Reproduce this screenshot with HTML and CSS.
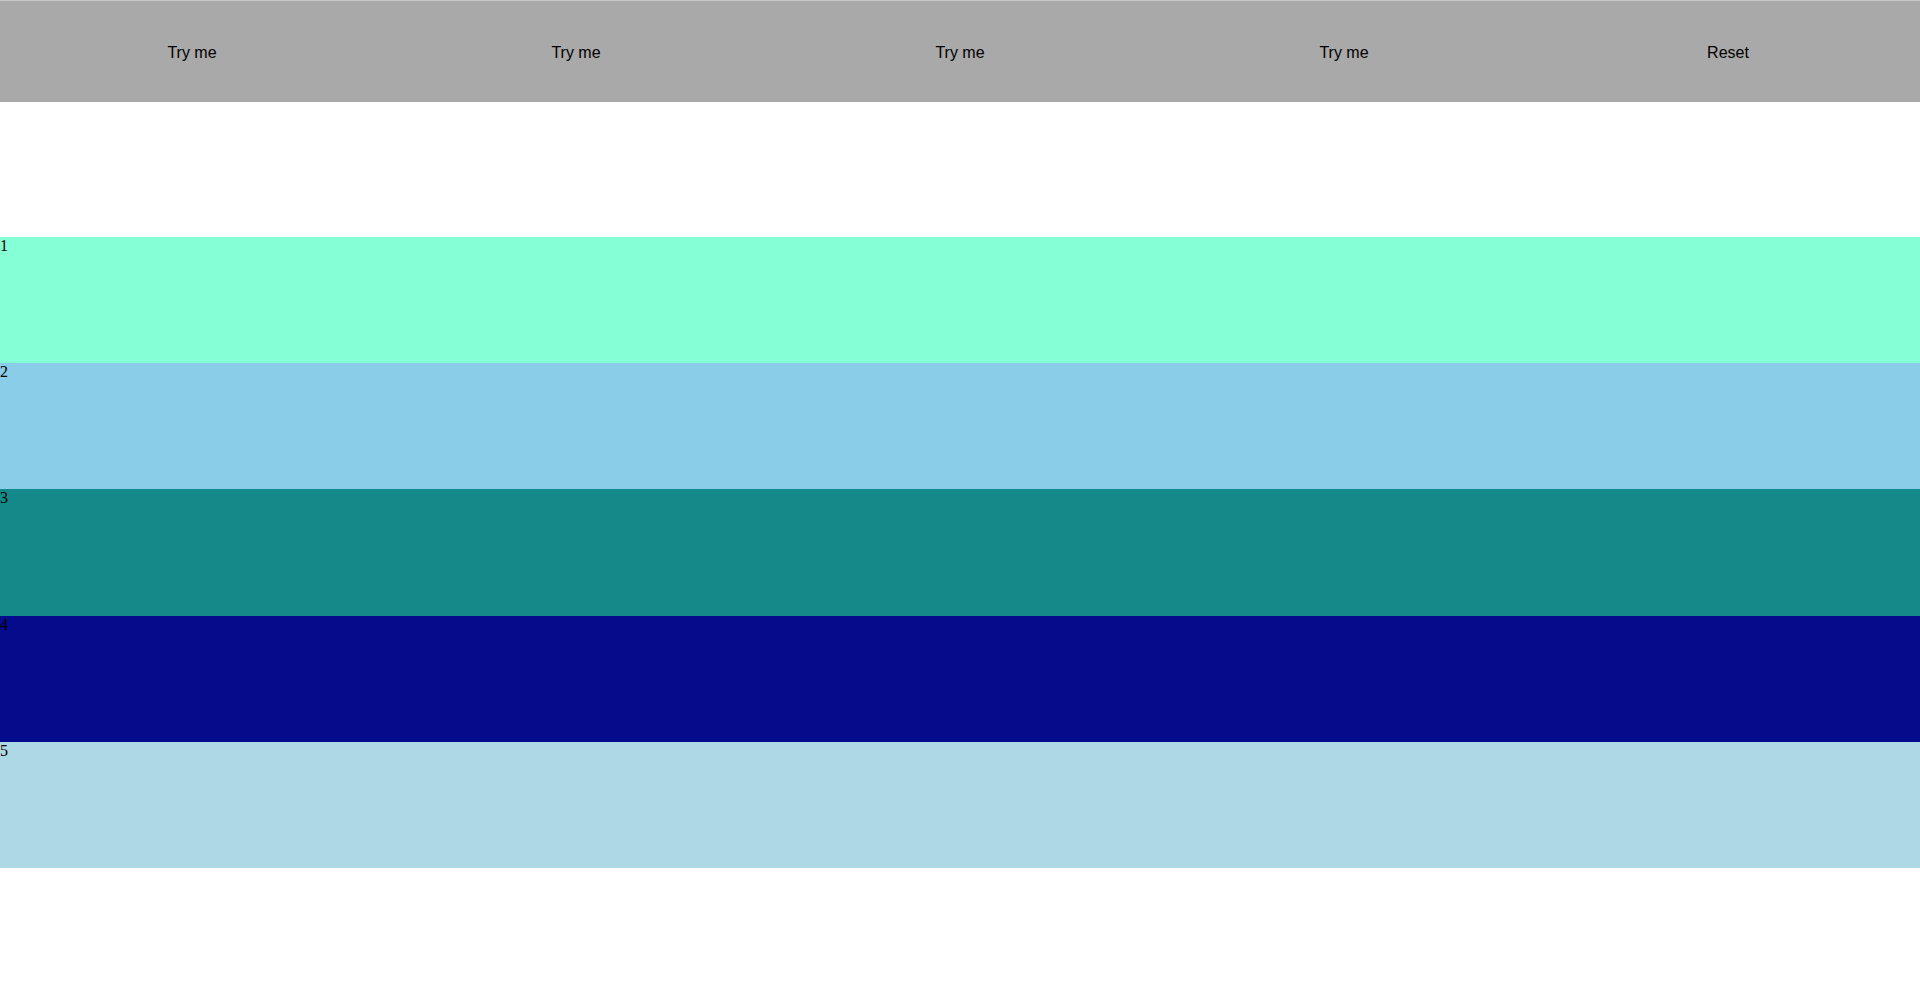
FILE: index.html
```
<!DOCTYPE html>
<html>
<head>
<meta charset="utf-8">
<link rel="stylesheet" href="styles.css">
</head>
<body>
<div class="bar">
  <div class="btn">Try me</div>
  <div class="btn">Try me</div>
  <div class="btn">Try me</div>
  <div class="btn">Try me</div>
  <div class="btn">Reset</div>
</div>
<div class="rows">
  <div class="row r1">1</div>
  <div class="row r2">2</div>
  <div class="row r3">3</div>
  <div class="row r4">4</div>
  <div class="row r5">5</div>
</div>
</body>
</html>
```
FILE: styles.css
```
html, body {
  margin: 0;
  padding: 0;
  background: #ffffff;
}
.bar {
  display: flex;
  height: 101px;
  background: #a9a9a9;
  border-top: 1px solid #c8c8c8;
}
.btn {
  flex: 1;
  display: flex;
  align-items: center;
  justify-content: center;
  padding-top: 2px;
  font-family: "Liberation Sans", Arial, sans-serif;
  font-size: 16px;
  color: #000;
}
.rows {
  margin-top: 135px;
}
.row {
  height: 126.2px;
  font-family: "Liberation Serif", "Times New Roman", serif;
  font-size: 16px;
  line-height: 18px;
  color: #000;
}
.r1 { background: #84ffd6; }
.r2 { background: #8acde9; }
.r3 { background: #138a89; }
.r4 { background: #050c8b; }
.r5 { background: #add8e5; }
```
